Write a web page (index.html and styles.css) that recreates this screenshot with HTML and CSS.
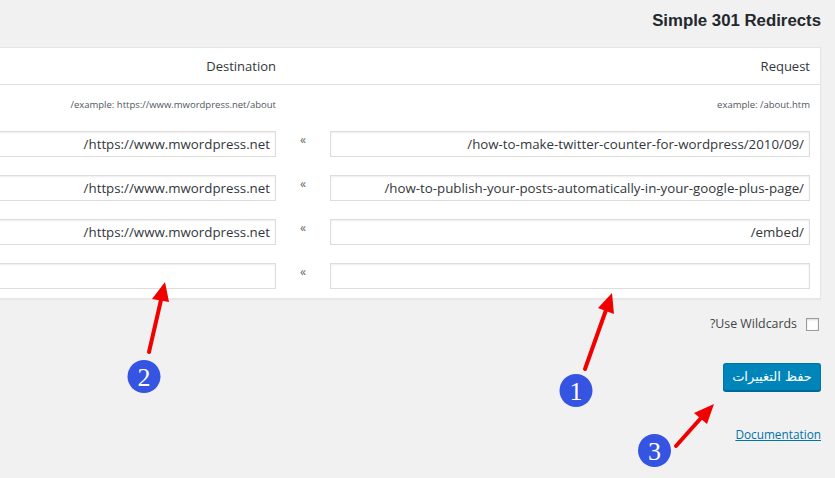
FILE: index.html
```html
<!DOCTYPE html>
<html lang="ar" dir="rtl">
<head>
<meta charset="utf-8">
<title>Simple 301 Redirects</title>
<link rel="stylesheet" href="styles.css">
</head>
<body>
<div class="wrap">
  <h2 class="title">Simple 301 Redirects</h2>
  <div class="panel">
    <table class="redirects">
      <colgroup><col class="c-req"><col class="c-mid"><col class="c-dest"></colgroup>
      <thead>
        <tr><th>Request</th><th></th><th>Destination</th></tr>
      </thead>
      <tbody>
        <tr class="ex">
          <td>example: /about.htm</td>
          <td></td>
          <td>example: https://www.mwordpress.net/about/</td>
        </tr>
        <tr>
          <td><input class="field" type="text" value="/how-to-make-twitter-counter-for-wordpress/2010/09/"></td>
          <td class="arrow">&raquo;</td>
          <td><input class="field" type="text" value="https://www.mwordpress.net/"></td>
        </tr>
        <tr>
          <td><input class="field" type="text" value="/how-to-publish-your-posts-automatically-in-your-google-plus-page/"></td>
          <td class="arrow">&raquo;</td>
          <td><input class="field" type="text" value="https://www.mwordpress.net/"></td>
        </tr>
        <tr>
          <td><input class="field" type="text" value="/embed/"></td>
          <td class="arrow">&raquo;</td>
          <td><input class="field" type="text" value="https://www.mwordpress.net/"></td>
        </tr>
        <tr>
          <td><input class="field" type="text" value=""></td>
          <td class="arrow">&raquo;</td>
          <td><input class="field" type="text" value=""></td>
        </tr>
      </tbody>
    </table>
  </div>
  <label class="wild"><input class="check" type="checkbox"><span>Use Wildcards?</span></label>
  <button class="save" type="button">حفظ التغييرات</button>
  <a class="doc" href="#">Documentation</a>
</div>

<svg class="notes" width="835" height="478" viewBox="0 0 835 478" aria-hidden="true">
  <g stroke="#f20000" stroke-width="4" stroke-linecap="round">
    <line x1="585" y1="369" x2="606" y2="310"/>
    <line x1="149" y1="352" x2="161" y2="300"/>
    <line x1="676" y1="446" x2="701" y2="418"/>
  </g>
  <g fill="#f20000">
    <polygon points="612,293 614,314 598,308"/>
    <polygon points="165,282 169,302 152,299"/>
    <polygon points="714,404 707,424 694,413"/>
  </g>
  <g fill="#3554e1">
    <circle cx="576" cy="390.5" r="16.5"/>
    <circle cx="144" cy="376.5" r="16.5"/>
    <circle cx="654.5" cy="450.5" r="16.5"/>
  </g>
  <g fill="#fff" font-family="'Liberation Serif', serif" font-size="26" text-anchor="middle">
    <text x="576" y="399.5">1</text>
    <text x="144" y="385.5">2</text>
    <text x="654.5" y="459.5">3</text>
  </g>
</svg>
</body>
</html>
```
FILE: styles.css
```css
* { box-sizing: border-box; }
html, body { margin: 0; padding: 0; }
body {
  width: 835px;
  height: 478px;
  overflow: hidden;
  position: relative;
  background: #f1f1f1;
  color: #444;
  font-family: "Open Sans", "Noto Sans", "DejaVu Sans", sans-serif;
}
.wrap {
  display: flex;
  flex-direction: column;
  align-items: flex-start;
  padding: 11px 14px 0 0;
}
.title {
  margin: 0;
  font-family: "Liberation Sans", Arial, sans-serif;
  font-weight: bold;
  font-size: 16.8px;
  line-height: 20px;
  color: #23282d;
}
.panel {
  margin-top: 16px;
  width: 1000px;
  flex: none;
  background: #fff;
  border: 1px solid #e5e5e5;
  box-shadow: 0 1px 1px rgba(0,0,0,.04);
}
.redirects {
  width: 100%;
  table-layout: fixed;
  border-collapse: collapse;
  border-spacing: 0;
}
.c-req { width: 500px; }
.c-mid { width: 34px; }
.redirects th {
  padding: 8px 10px;
  font-weight: normal;
  font-size: 13px;
  line-height: 20px;
  color: #32373c;
  text-align: right;
  border-bottom: 1px solid #e1e1e1;
}
.redirects td {
  padding: 9px 10px;
  vertical-align: top;
}
.ex td {
  padding: 10px 10px 8px;
  font-size: 9.5px;
  line-height: 19px;
  color: #50575e;
}
.redirects td.arrow {
  padding: 9px 0 0;
  text-align: center;
  font-size: 12px;
  line-height: 18px;
  color: #666;
}
.field {
  display: block;
  width: 100%;
  height: 26px;
  margin: 0;
  padding: 0 5px;
  border: 1px solid #ddd;
  box-shadow: inset 0 1px 2px rgba(0,0,0,.07);
  background: #fff;
  color: #32373c;
  font-family: "Open Sans", "Noto Sans", sans-serif;
  font-size: 13.3px;
  text-align: right;
  outline: none;
}
.wild {
  margin-top: 17px;
  display: flex;
  align-items: center;
  gap: 9px;
  font-size: 12.4px;
  line-height: 16px;
  color: #444;
}
.check {
  -webkit-appearance: none;
  appearance: none;
  width: 13px;
  height: 13px;
  margin: 0 2px 0 0;
  border: 1px solid #9a9a9a;
  background: #fff;
  box-shadow: inset 0 1px 2px rgba(0,0,0,.15);
}
.save {
  margin-top: 31px;
  width: 98px;
  height: 28px;
  padding: 0 8px;
  border: 1px solid #0073aa;
  border-bottom-color: #006799;
  border-radius: 3px;
  background: #0085ba;
  box-shadow: 0 1px 0 #006799;
  color: #fff;
  font-family: "DejaVu Sans", sans-serif;
  font-size: 13px;
  line-height: 26px;
  text-align: center;
}
.doc {
  margin-top: 35px;
  font-size: 11.8px;
  line-height: 16px;
  color: #0073aa;
  text-decoration: underline;
}
.notes {
  position: absolute;
  top: 0;
  left: 0;
  pointer-events: none;
}
```
